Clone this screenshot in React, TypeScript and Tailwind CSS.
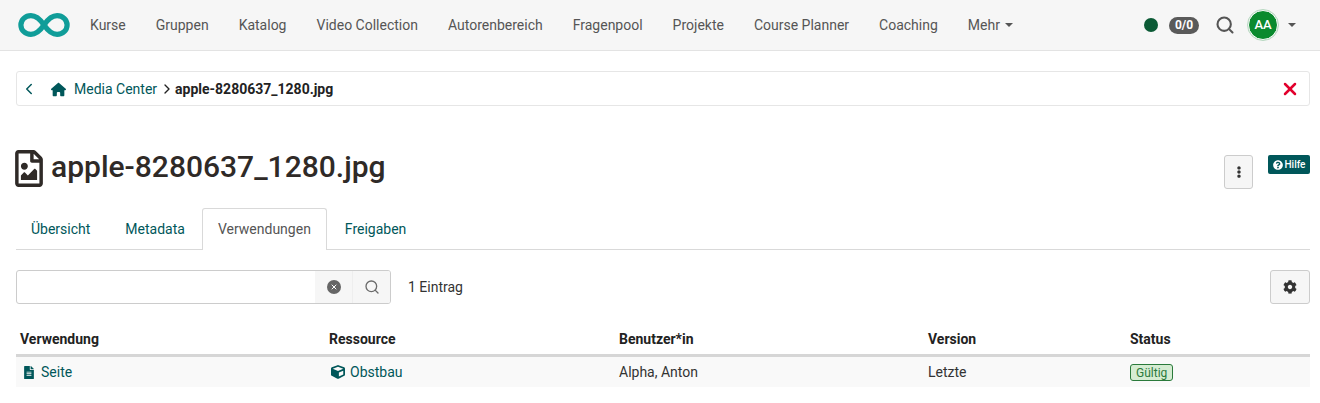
import { ChevronLeft, ChevronRight, Search, X } from 'lucide-react';
import { FaCube, FaFileAlt, FaQuestionCircle, FaRegFileImage, FaCog, FaEllipsisV } from 'react-icons/fa';
import { FaHouse } from 'react-icons/fa6';

const navItems = ['Kurse', 'Gruppen', 'Katalog', 'Video Collection', 'Autorenbereich', 'Fragenpool', 'Projekte', 'Course Planner', 'Coaching'];
const tabs = ['Übersicht', 'Metadata', 'Verwendungen', 'Freigaben'];
const columns = ['Verwendung', 'Ressource', 'Benutzer*in', 'Version', 'Status'];
const gridCols = 'grid grid-cols-[309px_290px_309px_202px_1fr]';

function Logo() {
  return (
    <svg width="52" height="26" viewBox="0 0 54 27" fill="none" className="shrink-0">
      <path
        d="M27 13.5C22.5 6.9 18 3.8 13.4 3.8C7.6 3.8 3 8 3 13.5C3 19 7.6 23.2 13.4 23.2C18 23.2 22.5 20.1 27 13.5C31.5 6.9 36 3.8 40.6 3.8C46.4 3.8 51 8 51 13.5C51 19 46.4 23.2 40.6 23.2C36 23.2 31.5 20.1 27 13.5Z"
        stroke="#109d99"
        strokeWidth="5.4"
      />
    </svg>
  );
}

function Caret() {
  return <span className="inline-block w-0 h-0 border-x-4 border-x-transparent border-t-4 border-t-[#555]" />;
}

function TopNav() {
  return (
    <nav className="h-[51px] bg-[#f6f6f6] border-b border-[#e3e3e3] flex items-center pl-[18px] pr-[24px] text-[#555]">
      <Logo />
      <ul className="flex items-center ml-[5px]">
        {navItems.map((item) => (
          <li key={item} className="px-[15px]">{item}</li>
        ))}
        <li className="px-[15px] flex items-center gap-[5px]">
          Mehr <Caret />
        </li>
      </ul>
      <div className="ml-auto flex items-center">
        <span className="w-[14px] h-[14px] rounded-full bg-[#0b5a35]" />
        <span className="ml-[11px] w-[30px] h-[17px] rounded-full bg-[#5a5a5a] text-white text-[12px] font-bold flex items-center justify-center">0/0</span>
        <Search size={20} strokeWidth={2.5} className="ml-[16px] text-[#555] -mt-[1px]" />
        <span className="ml-[13px] w-[30px] h-[30px] rounded-full bg-[#0a8a2e] border border-white outline outline-[#b7d8c0] text-white text-[13px] font-medium flex items-center justify-center">AA</span>
        <span className="ml-[10px] flex"><Caret /></span>
      </div>
    </nav>
  );
}

function Breadcrumb() {
  return (
    <div className="mt-[20px] h-[35px] pt-[1px] border border-[#e6e6e6] rounded-[3px] flex items-center pl-[3px] pr-[9px]">
      <ChevronLeft size={18} strokeWidth={2} className="text-[#00575a]" />
      <FaHouse className="ml-[13px] text-[#00575a] text-[15px]" />
      <span className="ml-[8px] text-[#00575a]">Media Center</span>
      <ChevronRight size={16} strokeWidth={2} className="ml-[2px] text-[#222]" />
      <span className="font-bold text-[#222]">apple-8280637_1280.jpg</span>
      <X size={20} strokeWidth={3} className="ml-auto text-[#e2002d]" />
    </div>
  );
}

function TitleRow() {
  return (
    <div className="mt-[43px] h-[46px] flex items-start">
      <FaRegFileImage className="mt-[1px] w-[28px] h-[37px] text-[#2f2a27] shrink-0 -ml-[1px]" />
      <h1 className="ml-[8px] -mt-[1px] text-[30px] leading-[38px] font-medium text-[#2f2a27]">apple-8280637_1280.jpg</h1>
      <button className="ml-auto mt-[6px] w-[29px] h-[34px] bg-[#f6f6f6] border border-[#ccc] rounded-[3px] flex items-center justify-center">
        <FaEllipsisV className="text-[#333] text-[12px]" />
      </button>
      <span className="ml-[15px] mt-[6px] h-[19px] w-[42px] justify-center bg-[#00575a] rounded-[2px] text-white text-[10px] font-medium flex items-center gap-[2px]">
        <FaQuestionCircle className="text-[10px]" />
        Hilfe
      </span>
    </div>
  );
}

function Tabs() {
  return (
    <div className="mt-[13px] h-[42px] border-b border-[#d9d9d9] flex">
      {tabs.map((tab, i) =>
        tab === 'Verwendungen' ? (
          <div key={tab} className="h-[42px] mr-[2px] px-[15px] pt-[10px] bg-white border border-b-0 border-[#d9d9d9] rounded-t-[3px] text-[#555]">{tab}</div>
        ) : (
          <div key={tab} className={i === 0 ? 'pl-[15px] pr-[17px] mr-[2px] pt-[11px] text-[#00575a]' : i === 1 ? 'pl-[16px] pr-[15px] mr-[2px] pt-[11px] text-[#00575a]' : 'px-[16px] mr-[2px] pt-[11px] text-[#00575a]'}>{tab}</div>
        ),
      )}
    </div>
  );
}

function SearchRow() {
  return (
    <div className="mt-[20px] h-[34px] flex items-center">
      <div className="w-[375px] h-[34px] border border-[#ccc] rounded-[3px] flex overflow-hidden">
        <div className="flex-1" />
        <div className="w-[38px] bg-[#f6f6f6] border-r border-[#eee] flex items-center justify-center">
          <span className="w-[14px] h-[14px] rounded-full bg-[#666] flex items-center justify-center">
            <X size={8} strokeWidth={3} className="text-white" />
          </span>
        </div>
        <div className="w-[37px] bg-[#f6f6f6] flex items-center justify-center">
          <Search size={16} strokeWidth={2} className="text-[#6b6b6b]" />
        </div>
      </div>
      <span className="ml-[17px] text-[#333]">1 Eintrag</span>
      <button className="ml-auto w-[40px] h-[34px] bg-[#f6f6f6] border border-[#ccc] rounded-[3px] flex items-center justify-center">
        <FaCog className="text-[#333] text-[14px]" />
      </button>
    </div>
  );
}

function ResultTable() {
  return (
    <div className="mt-[18px]">
      <div className={`${gridCols} h-[35px] pt-[3px] border-b-[3px] border-[#d6d6d6] font-bold text-[#222] items-center`}>
        {columns.map((c) => (
          <div key={c} className="pl-[4px]">{c}</div>
        ))}
      </div>
      <div className={`${gridCols} h-[30px] bg-[#f9f9f9] items-center text-[#333]`}>
        <div className="pl-[8px] flex items-center gap-[7px] text-[#00575a]">
          <FaFileAlt className="w-[10px] h-[13px]" />
          Seite
        </div>
        <div className="pl-[6px] flex items-center gap-[5px] text-[#00575a]">
          <FaCube className="text-[14px]" />
          Obstbau
        </div>
        <div className="pl-[4px]">Alpha, Anton</div>
        <div className="pl-[4px]">Letzte</div>
        <div className="pl-[4px]">
          <span className="inline-flex items-center h-[17px] px-[5px] bg-[#d5ecd2] border border-[#2a7a3b] rounded-[3px] text-[#2a7a3b] text-[12px]">Gültig</span>
        </div>
      </div>
    </div>
  );
}

export default function App() {
  return (
    <div className="h-[403px] bg-white overflow-hidden text-[14px] font-['Roboto',sans-serif]">
      <TopNav />
      <main className="px-[16px] pr-[10px]">
        <Breadcrumb />
        <TitleRow />
        <Tabs />
        <SearchRow />
        <ResultTable />
      </main>
    </div>
  );
}
